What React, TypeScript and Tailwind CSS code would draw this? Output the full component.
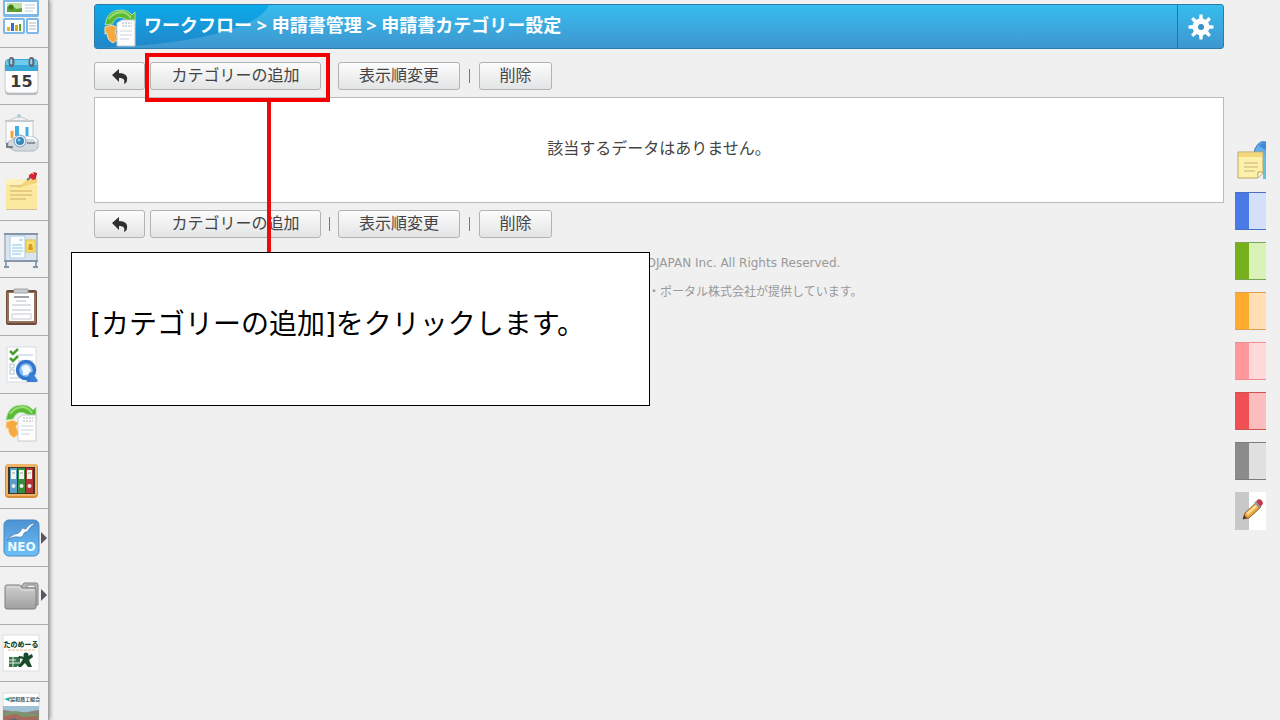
import React from "react";

const svgProps = { width: 40, height: 40, viewBox: "0 0 40 40", "aria-hidden": true } as const;

function PortalIcon() {
  return (
    <svg {...svgProps}>
      <rect x="3" y="1" width="36" height="18" rx="2" fill="#7db8e8" />
      <rect x="5" y="4" width="32" height="12" fill="#fbfdff" />
      <rect x="7" y="5" width="15" height="9" fill="#bfe0a0" />
      <path d="M7 14V9l5-2 4 4 6-1v4z" fill="#5f9d2c" />
      <circle cx="11" cy="9" r="2.5" fill="#3d7d1d" />
      <path d="M25 7h10M25 10h10M25 13h8" stroke="#c5ccd4" />
      <rect x="3" y="20" width="22" height="16" rx="2" fill="#7db8e8" />
      <rect x="5" y="22" width="18" height="12" fill="#fff" />
      <rect x="7" y="29" width="3" height="4" fill="#f0b01e" />
      <rect x="11" y="25" width="3" height="8" fill="#2d6fd0" />
      <rect x="15" y="27" width="3" height="6" fill="#d9a61c" />
      <rect x="19" y="26" width="2" height="7" fill="#54a62c" />
      <rect x="26" y="20" width="13" height="16" rx="2" fill="#7db8e8" />
      <rect x="28" y="22" width="9" height="12" fill="#fff" />
      <path d="M29 25h7M29 28h7M29 31h7" stroke="#aab7c4" />
    </svg>
  );
}

function CalendarIcon() {
  return (
    <svg {...svgProps}>
      <rect x="5" y="7" width="33" height="32" rx="4" fill="#b4b9bd" />
      <rect x="5" y="5" width="33" height="32" rx="4" fill="#fdfdfd" stroke="#c4c8cc" />
      <path d="M5 15V7q0-4 4-4h25q4 0 4 4v8z" fill="#39a9da" />
      <path d="M6 9V7q0-3 3-3h25q3 0 3 3v2z" fill="#6fcaf0" />
      <g fill="none" stroke="#5c6870" strokeWidth="2">
        <ellipse cx="11.500" cy="6" rx="2" ry="4" />
        <ellipse cx="31.500" cy="6" rx="2" ry="4" />
      </g>
      <path d="M11 3v5M31 3v5" stroke="#d8e4ea" />
      <text x="21.500" y="31" textAnchor="middle" fontSize="16" fontWeight="700" fill="#3a3a3a" fontFamily="DejaVu Sans, sans-serif">15</text>
    </svg>
  );
}

function ProjectorIcon() {
  return (
    <svg {...svgProps}>
      <path d="M8 7L19 2l11 5" fill="none" stroke="#c6cacd" />
      <rect x="17" y="0" width="4" height="4" rx="2" fill="#b3cbd5" />
      <rect x="6" y="7" width="27" height="22" fill="#fbfbfb" stroke="#c5c9cc" />
      <path d="M5 7h29" stroke="#c4cace" strokeWidth="2" />
      <path d="M12 24V17" stroke="#f2a53a" strokeWidth="3" />
      <path d="M17 22V12" stroke="#43aee0" strokeWidth="4" />
      <path d="M27 22V13" stroke="#43aee0" strokeWidth="3" />
      <path d="M8 28l8-5h18l4 3v8l-4 3H15l-7-4z" fill="#d4d9de" stroke="#b0b8c0" />
      <path d="M16 24h17l4 3" fill="none" stroke="#fafbfc" strokeWidth="2" />
      <path d="M7 29v4h6" fill="none" stroke="#76818c" strokeWidth="2" />
      <circle cx="20" cy="27" r="6" fill="#dfeaf2" stroke="#7fa4bd" />
      <circle cx="20" cy="27" r="4" fill="#3688bd" />
      <circle cx="19" cy="26" r="1.500" fill="#8dd3f5" />
      <path d="M27 29h8" stroke="#8a949d" strokeWidth="2" />
    </svg>
  );
}

function NoteIcon() {
  return (
    <svg {...svgProps}>
      <path d="M6 9h31v30H6z" fill="#cfc29a" />
      <path d="M6 8h31v30H6z" fill="#fbe9a0" />
      <path d="M6 8h31v6H6z" fill="#fdf1bb" />
      <path d="M28 8L17 17l20-5V8z" fill="#f4d37b" />
      <path d="M10 15h11M10 20h22M10 24h22M10 28h16" stroke="#cfae62" />
      <path d="M27 9l5-4" stroke="#6c7478" strokeWidth="2" />
      <path d="M29 4l3-2 4 3v3l-3 1-4-3z" fill="#d82a32" />
      <path d="M33 1l4 1-1 5z" fill="#b9151f" />
    </svg>
  );
}

function BoardIcon() {
  return (
    <svg {...svgProps}>
      <path d="M6 4v34M36 4v34" stroke="#95a4b5" strokeWidth="2" />
      <rect x="5" y="5" width="32" height="27" fill="#dce5ee" stroke="#8294aa" />
      <path d="M4 5h34M4 32h34" stroke="#8596aa" strokeWidth="2" />
      <path d="M10 7h15v22H10z" fill="#fafdff" stroke="#a9cce5" />
      <path d="M19 11h4M12 16h10M12 19h11M12 22h11M12 25h9" stroke="#8fbfe2" />
      <rect x="26" y="11" width="9" height="12" fill="#f7df70" stroke="#dcc04c" />
      <path d="M28 21l1-6h3l1 6z" fill="#d89c25" />
      <path d="M4 38h5M33 38h5" stroke="#8293a7" strokeWidth="2" />
    </svg>
  );
}

function ClipboardIcon() {
  return (
    <svg {...svgProps}>
      <rect x="6" y="3" width="31" height="35" rx="2" fill="#6e4c3b" />
      <rect x="7" y="5" width="29" height="31" rx="1" fill="#95705a" />
      <rect x="9" y="6" width="25" height="28" fill="#fff" />
      <path d="M14 6V2h14v4z" fill="#c8cbce" stroke="#a0a4a8" />
      <path d="M14 10h15" stroke="#9ca1a6" strokeWidth="2" />
      <path d="M16 14h10M12 18h19M12 23h19" stroke="#b9bec3" />
      <rect x="12" y="27" width="19" height="5" fill="none" stroke="#c5cacf" />
    </svg>
  );
}

function SurveyIcon() {
  return (
    <svg {...svgProps}>
      <rect x="7" y="3" width="29" height="35" fill="#fff" stroke="#d7dce1" />
      <g fill="none" stroke="#b4c5d4">
        <rect x="10" y="20" width="4" height="4" />
        <rect x="10" y="26" width="4" height="4" />
        <path d="M18 11h15M18 17h15M10 34h12" />
      </g>
      <g fill="none" stroke="#4aa035" strokeWidth="2.500">
        <path d="M10 7l3 3 5-5" />
        <path d="M10 14l3 3 5-5" />
      </g>
      <path d="M26 34h7l5 4H27z" fill="#3a7fd2" />
      <circle cx="26" cy="26" r="8.500" fill="#8cc0f5" stroke="#3277cc" strokeWidth="3.500" />
      <path d="M28 30l4-2 6 9h-7z" fill="#3a7fd2" />
      <path d="M23 31v-4q-3-3 0-5 5-3 7 2l1 3-2 1v2l-3 1z" fill="#eff8ff" />
    </svg>
  );
}

function WorkflowIcon() {
  return (
    <svg {...svgProps}>
      <path d="M6 18Q8 3 22 3q7 0 11 5l3-3v12H24l4-4Q18 6 13 17z" fill="#59bb35" stroke="#a7dfa0" />
      <path d="M10 12Q15 5 23 5q6 1 9 6" fill="none" stroke="#9add75" strokeWidth="2" />
      <path d="M6 20l7-2 6 3-3 3 3 8-5 4q-6-3-6-10l-2 1z" fill="#f5a940" stroke="#ffe0ac" />
      <path d="M18 16l5-3h13v26H18z" fill="#fdfdfe" stroke="#c6cbd2" />
      <path d="M23 16h10M23 19h10" stroke="#acb5c0" strokeDasharray="2 1" />
      <path d="M21 24h12M21 28h12M21 32h9" stroke="#ccd3da" />
    </svg>
  );
}

function BindersIcon() {
  return (
    <svg {...svgProps}>
      <rect x="5" y="4" width="33" height="34" rx="4" fill="#d88d38" />
      <rect x="6" y="4" width="31" height="32" rx="3" fill="#efb468" />
      <rect x="8" y="7" width="27" height="27" fill="#473324" />
      <rect x="10" y="8" width="7" height="25" fill="#5ba0cc" />
      <rect x="18" y="8" width="7" height="25" fill="#368d3d" />
      <rect x="26" y="8" width="7" height="25" fill="#b43436" />
      <path d="M11 10h5v9h-5zM19 10h5v9h-5zM27 10h5v9h-5z" fill="#f1f3ee" />
      <path d="M12 13h3M20 13h3M28 13h3" stroke="#a0a8a5" />
      <g fill="#e9eee9">
        <circle cx="13.500" cy="26" r="2" />
        <circle cx="21.500" cy="26" r="2" />
        <circle cx="29.500" cy="26" r="2" />
      </g>
    </svg>
  );
}

function NeoIcon() {
  return (
    <svg {...svgProps}>
      <defs>
        <linearGradient id="neo" x2="0" y2="1">
          <stop stopColor="#4d92d4" />
          <stop offset="1" stopColor="#6cc0f8" />
        </linearGradient>
      </defs>
      <rect x="4" y="2" width="35" height="36" rx="5" fill="url(#neo)" stroke="#4a87bd" />
      <path d="M7 22q5-5 8-6 5 0 7-6l4 1q3-6 10-6-6 3-8 8l-4 2q-1 5-6 4-4-1-11 3z" fill="#f7fcff" stroke="#315f8f" strokeWidth=".5" />
      <text x="21.500" y="33" textAnchor="middle" fontSize="12" fontWeight="700" fill="#e8faff" fontFamily="DejaVu Sans, sans-serif">NEO</text>
    </svg>
  );
}

function FolderIcon() {
  return (
    <svg {...svgProps}>
      <defs>
        <linearGradient id="folder" x2="0" y2="1">
          <stop stopColor="#cfcfcf" />
          <stop offset="1" stopColor="#a0a0a0" />
        </linearGradient>
      </defs>
      <path d="M20 13l4-5h12q2 0 2 2v20H20z" fill="#b7b7b7" stroke="#858585" />
      <path d="M27 10h8v3h-8z" fill="#efefef" stroke="#8a8a8a" />
      <path d="M5 12q0-2 2-2h12q2 0 3 3h12q2 0 2 2v17q0 2-2 2H7q-2 0-2-2z" fill="url(#folder)" stroke="#7c7c7c" />
      <path d="M7 12h12l3 3h12" fill="none" stroke="#e4e4e4" />
    </svg>
  );
}

function TanomailIcon() {
  return (
    <svg {...svgProps}>
      <rect x="3" y="2" width="36" height="36" fill="#fff" stroke="#ddd" />
      <text x="21" y="14" textAnchor="middle" fontSize="7" fontWeight="900" fill="#17482b" fontFamily="Noto Sans CJK JP, sans-serif">たのめーる</text>
      <path d="M8 17h27" stroke="#e8ba8c" strokeDasharray="3 1" />
      <path d="M9 24h8v10H9zM17 24h3v9h-3z" fill="#39734b" />
      <path d="M9 27h7M9 30h11M13 23v12" stroke="#e1ede3" />
      <circle cx="26" cy="22" r="2.500" fill="#174b2b" />
      <path d="M19 23l7 1 6-3 1 3-4 3 3 7h-4l-3-4-4 4h-3l5-8-5-1z" fill="#174b2b" />
    </svg>
  );
}

function TownIcon() {
  return (
    <svg {...svgProps}>
      <rect x="3" y="2" width="36" height="36" fill="#fff" stroke="#ddd" />
      <path d="M4 8l7-2-2 3 2 2z" fill="#1daca8" />
      <text x="25" y="10" textAnchor="middle" fontSize="5" fontWeight="700" fill="#3c5963" fontFamily="Noto Sans CJK JP, sans-serif">協和商工組合</text>
      <rect x="3" y="15" width="36" height="23" fill="#8b817b" />
      <path d="M3 15h36v4L22 22 3 19z" fill="#9fc1d3" />
      <path d="M3 22l13-2 23 4v5H3z" fill="#7c956b" />
      <path d="M4 25l12-2 7 3 15-1v6H3z" fill="#a66b5c" />
      <path d="M3 30l12-3 7 5 17-3v9H3z" fill="#6c6973" />
    </svg>
  );
}

const apps: { name: string; Icon: () => React.JSX.Element; more?: boolean }[] = [
  { name: "ポータル", Icon: PortalIcon },
  { name: "スケジュール", Icon: CalendarIcon },
  { name: "設備予約", Icon: ProjectorIcon },
  { name: "伝言", Icon: NoteIcon },
  { name: "掲示板", Icon: BoardIcon },
  { name: "回覧", Icon: ClipboardIcon },
  { name: "アンケート", Icon: SurveyIcon },
  { name: "ワークフロー", Icon: WorkflowIcon },
  { name: "文書管理", Icon: BindersIcon },
  { name: "NEO", Icon: NeoIcon, more: true },
  { name: "フォルダー", Icon: FolderIcon, more: true },
  { name: "たのめーる", Icon: TanomailIcon },
  { name: "組合", Icon: TownIcon },
];

const tabs = [
  { name: "青", style: "border-y-[#4a6fc4] bg-[#d3dffb]", bar: "bg-[#4a7ae6]" },
  { name: "緑", style: "border-y-[#79a851] bg-[#daf2b8]", bar: "bg-[#77b01d]" },
  { name: "橙", style: "border-y-[#dda052] bg-[#ffdfb3]", bar: "bg-[#ffab2e]" },
  { name: "桃", style: "border-y-[#ee8c90] bg-[#ffd8da]", bar: "bg-[#ff979b]" },
  { name: "赤", style: "border-y-[#cf5156] bg-[#fdbcbe]", bar: "bg-[#f05054]" },
  { name: "灰", style: "border-y-[#7c7c7c] bg-[#e0e0e0]", bar: "bg-[#8b8b8b]" },
];

const buttonStyle =
  "flex h-7 items-center justify-center rounded-[3px] border border-[#b3b3b3] bg-linear-to-b from-[#fcfcfc] to-[#e3e4e5] pb-0.5 text-base leading-none text-[#444]";

function Toolbar() {
  return (
    <div className="flex items-center">
      <button type="button" aria-label="戻る" className={`${buttonStyle} w-[51px] pt-0.5`}>
        <svg width="18" height="18" viewBox="0 0 18 18" aria-hidden="true">
          <path d="M1 8l7-6v4c6 0 9 3 8 7 0 2-1 3-3 4 1-4 0-6-5-6v4z" fill="#303030" />
        </svg>
      </button>
      <button type="button" className={`${buttonStyle} ml-[5px] w-[171px]`}>カテゴリーの追加</button>
      <span className="mx-2 h-3.5 w-px bg-[#777]" />
      <button type="button" className={`${buttonStyle} w-[122px]`}>表示順変更</button>
      <span className="mx-[9px] h-3.5 w-px bg-[#777]" />
      <button type="button" className={`${buttonStyle} w-[73px]`}>削除</button>
    </div>
  );
}

function Gear() {
  return (
    <svg width="26" height="26" viewBox="-13 -13 26 26" aria-hidden="true">
      <g fill="#fff">
        {[0, 45, 90, 135].map((angle) => (
          <path key={angle} d="M-2-7l.5-5.500h3l.5 5.500V7l-.5 5.500h-3L-2 7z" transform={`rotate(${angle})`} />
        ))}
        <circle r="8.500" />
      </g>
      <circle r="3" fill="#3792c8" />
    </svg>
  );
}

export default function App() {
  return (
    <div className="relative flex h-screen overflow-hidden bg-[#f0f0f0] font-['Open_Sans','Noto_Sans_CJK_JP',sans-serif] text-[#444]">
      <nav aria-label="アプリケーション" className="w-[49px] shrink-0 overflow-hidden border-r border-[#a5a5a5] bg-[#f1f1f1] shadow-[1px_0_4px_#888]">
        <ul className="-mt-2.5 flex h-[750px] flex-col">
          {apps.map(({ name, Icon, more }) => (
            <li key={name} className="min-h-0 flex-1 border-b border-[#aaa]">
              <a href="#" aria-label={name} className="flex h-full items-center">
                <Icon />
                {more && (
                  <svg width="8" height="14" viewBox="0 0 8 14" className="shrink-0" aria-hidden="true">
                    <path d="M1 1l6 6-6 6z" fill="#55595f" />
                  </svg>
                )}
              </a>
            </li>
          ))}
        </ul>
      </nav>

      <main className="ml-[45px] min-w-0 flex-1 pt-1">
        <header className="relative flex h-[45px] overflow-hidden rounded-[3px] border border-[#2c7ba8] bg-linear-to-b from-[#35bdee] to-[#3e96cf]">
          <svg className="absolute top-0 left-0" width="175" height="43" viewBox="0 0 175 43" aria-hidden="true">
            <defs>
              <linearGradient id="swoosh" x2="0" y2="1">
                <stop stopColor="#0baae9" />
                <stop offset="1" stopColor="#2186c9" />
              </linearGradient>
            </defs>
            <path d="M0 0h174q-6 14-39 25Q87 40 0 43z" fill="url(#swoosh)" />
          </svg>
          <div className="relative flex flex-1 items-center pl-1">
            <WorkflowIcon />
            <h1 className="ml-[5px] pb-1 text-lg leading-none font-bold whitespace-nowrap text-white">
              ワークフロー &gt; 申請書管理 &gt; 申請書カテゴリー設定
            </h1>
          </div>
          <button type="button" aria-label="設定" className="relative flex w-[46px] items-center justify-center border-l border-[#2874a0]">
            <Gear />
          </button>
        </header>

        <div className="pt-[13px]">
          <Toolbar />
        </div>
        <section className="my-[7px] flex h-[106px] items-center justify-center border border-[#bababa] bg-white pb-1">
          <p className="text-base">該当するデータはありません。</p>
        </section>
        <Toolbar />

        <footer className="ml-[536px] pt-4 text-xs leading-[18px] whitespace-nowrap text-[#999]">
          <p className="font-['DejaVu_Sans',sans-serif]">NEOJAPAN Inc. All Rights Reserved.</p>
          <p className="ml-[18px] pt-[11px]">・ポータル株式会社が提供しています。</p>
        </footer>
      </main>

      <aside className="mr-[14px] ml-[11px] flex w-[31px] shrink-0 flex-col gap-3 overflow-hidden pt-[141px]">
        <button type="button" aria-label="付箋" className="h-[39px]">
          <svg width="31" height="39" viewBox="0 0 31 39" aria-hidden="true">
            <circle cx="33" cy="13" r="14" fill="#64afe9" stroke="#477cc5" />
            <path d="M28 16h3v22h-3z" fill="#65c0e2" />
            <path d="M24 5q2-4 8-4v9z" fill="#438bd9" />
            <path d="M3 11h25v21l-5 5H3z" fill="#fdf0aa" stroke="#bca562" />
            <path d="M4 12h23v4H4z" fill="#f4d779" />
            <path d="M9 22h14M9 26h14M9 30h11" stroke="#c7b374" />
            <path d="M23 37v-6h5" fill="#fffbe0" stroke="#b99f5c" />
          </svg>
        </button>
        {tabs.map((tab) => (
          <button key={tab.name} type="button" aria-label={tab.name} className={`flex h-[38px] shrink-0 border-y ${tab.style}`}>
            <span className={`h-full w-[14px] ${tab.bar}`} />
          </button>
        ))}
        <button type="button" aria-label="編集" className="h-[38px] shrink-0">
          <svg width="31" height="38" viewBox="0 0 31 38" aria-hidden="true">
            <path d="M0 0h31v38H0z" fill="#fff" />
            <path d="M0 0h14v38H0z" fill="#c8c8c8" />
            <path d="M8 27l2-6L22 10l4 5-12 11z" fill="#eda63c" stroke="#8b5f35" />
            <path d="M11 21L23 11l1 2-11 10z" fill="#ffe093" />
            <path d="M21 9l3-2q4 1 4 5l-3 3z" fill="#c43b4c" />
            <path d="M20 10l5 6" stroke="#909aa2" strokeWidth="2" />
            <path d="M8 27l1-4 3 3z" fill="#4a3b30" />
          </svg>
        </button>
      </aside>

      <div className="pointer-events-none absolute top-[53px] left-[145px] h-[49px] w-[185px] border-4 border-[#f40000]" />
      <div className="pointer-events-none absolute top-[102px] left-[267px] h-[150px] w-1 bg-[#e80c0c]" />
      <div className="absolute top-[252px] left-[71px] flex h-[154px] w-[579px] items-center border border-black bg-white pb-2 pl-[18px]">
        <p className="font-['DejaVu_Sans','Noto_Sans_CJK_JP',sans-serif] text-[28px] leading-none whitespace-nowrap text-black">
          [カテゴリーの追加]をクリックします。
        </p>
      </div>
    </div>
  );
}
